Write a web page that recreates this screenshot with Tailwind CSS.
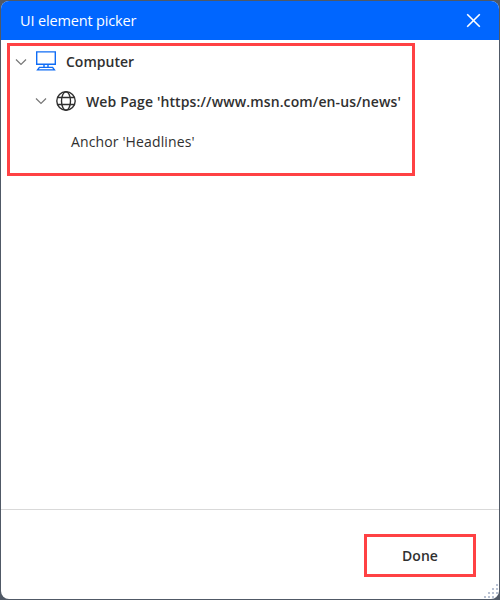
<!DOCTYPE html>
<html lang="en">
<head>
<meta charset="utf-8">
<title>UI element picker</title>
<script src="https://cdn.jsdelivr.net/npm/@tailwindcss/browser@4"></script>
</head>
<body class="h-[600px] w-[500px] overflow-hidden bg-[#505966] p-px font-['Open_Sans','Noto_Sans',sans-serif] text-[14px] leading-[20px] text-[#303030]">
<main class="relative flex h-[598px] w-[498px] flex-col overflow-hidden rounded-[8px] bg-white">
  <header class="flex h-[39px] shrink-0 items-center justify-between bg-[#0066ff] pl-[19px] pr-[18px] text-white">
    <h1 class="whitespace-nowrap text-[14.5px] tracking-[-0.15px]">UI element picker</h1>
    <button class="flex" aria-label="Close">
      <svg width="15" height="15" viewBox="0 0 15 15" fill="none" stroke="currentColor" stroke-width="1.6"><path d="M1.2 1.2 13.8 13.8M13.8 1.2 1.2 13.8"/></svg>
    </button>
  </header>
  <section class="flex-1 pl-[6px] pt-[3px]">
    <div class="h-[133px] w-[408px] border-3 border-[#ff4144]">
      <div class="flex h-[31px] items-center pl-[5px]">
        <svg class="mr-[9px]" width="12" height="8" viewBox="0 0 12 8" fill="none" stroke="#777" stroke-width="1.2"><path d="M1 1.5 6 6.5 11 1.5"/></svg>
        <svg class="mr-[10px] -mt-[2px]" width="20" height="20" viewBox="0 0 20 20" fill="none" stroke="#0f6cf5" stroke-width="1.4"><path d="M.7 .9h18.6v12.4H.7zM8 13.3v3.2M12 13.3v3.2M3.4 16.4h13.2L18.4 18.9H1.6z"/></svg>
        <span class="whitespace-nowrap font-semibold">Computer</span>
      </div>
      <div class="mt-[8px] flex h-[32px] items-center pl-[25px]">
        <svg class="mr-[9px]" width="12" height="8" viewBox="0 0 12 8" fill="none" stroke="#777" stroke-width="1.2"><path d="M1 1.5 6 6.5 11 1.5"/></svg>
        <svg class="mr-[10px]" width="20" height="20" viewBox="0 0 20 20" fill="none" stroke="#303030" stroke-width="1.4"><circle cx="10" cy="10" r="9.2"/><ellipse cx="10" cy="10" rx="4.5" ry="9.2"/><path d="M1.6 6.5h16.8M1.6 13.5h16.8"/></svg>
        <span class="whitespace-nowrap pt-[2px] font-semibold tracking-[0.12px]">Web Page 'https://www.msn.com/en-us/news'</span>
      </div>
      <div class="mt-[9px] flex h-[32px] items-center pl-[61px]"><span class="whitespace-nowrap tracking-[0.13px]">Anchor 'Headlines'</span></div>
    </div>
  </section>
  <footer class="flex h-[90px] shrink-0 justify-end border-t border-[#d9d9d9] pr-[23px] pt-[24px]">
    <button class="flex h-[43px] w-[112px] items-center justify-center border-3 border-[#ff4144] font-semibold">Done</button>
  </footer>
  <svg class="absolute bottom-[1px] right-[1px]" width="14" height="14" viewBox="0 0 14 14" fill="#b9c2d3"><path d="M12 0h2v2h-2zM8 4h2v2H8zM12 4h2v2h-2zM4 8h2v2H4zM8 8h2v2H8zM12 8h2v2h-2zM0 12h2v2H0zM4 12h2v2H4zM8 12h2v2H8zM12 12h2v2h-2z"/></svg>
</main>
</body>
</html>
